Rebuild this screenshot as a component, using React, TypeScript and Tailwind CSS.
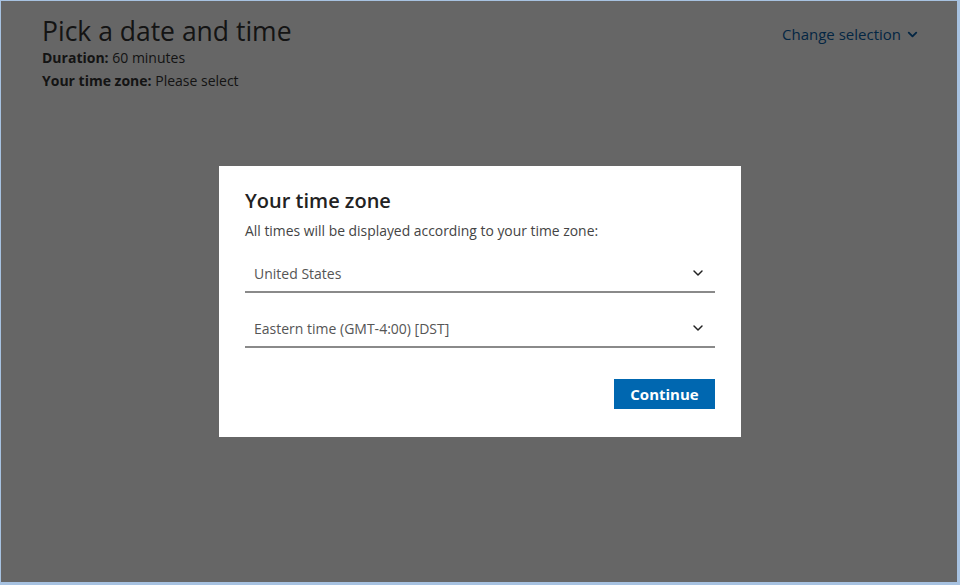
import { ChevronDown } from 'lucide-react';

const font = { fontFamily: '"Open Sans", "Liberation Sans", sans-serif' };

function Select({ value }: { value: string }) {
  return (
    <div className="flex items-center justify-between border-b-2 border-[#8a8a8a] pl-[9px] pr-[9px] h-[38px]">
      <span className="text-[14px] text-[#555]">{value}</span>
      <ChevronDown className="w-[16px] h-[16px] text-[#222]" strokeWidth={2.2} />
    </div>
  );
}

export default function App() {
  return (
    <div
      className="relative w-[960px] h-[585px] overflow-hidden bg-white border-t border-l border-r-[3px] border-b-[3px] border-[#a7c2e1]"
      style={font}
    >
      {/* page behind the dialog */}
      <div className="flex justify-between pl-[41px] pr-[37px] pt-[16px]">
        <div className="flex flex-col">
          <h1 className="text-[26.5px] leading-[29px] text-[#333]">Pick a date and time</h1>
          <p className="text-[14px] leading-[23px] text-[#333]">
            <span className="font-bold">Duration:</span> 60 minutes
          </p>
          <p className="text-[14px] leading-[23px] text-[#333]">
            <span className="font-bold">Your time zone:</span> Please select
          </p>
        </div>
        <button className="flex items-center gap-[4px] h-[24px] mt-[5px] text-[15px] text-[#0a5fa8]">
          Change selection
          <ChevronDown className="w-[15px] h-[15px]" strokeWidth={3} />
        </button>
      </div>

      {/* overlay */}
      <div className="absolute inset-0 bg-black/60 flex items-start justify-center pt-[165px] pl-[2px]">
        <div className="w-[522px] bg-white px-[26px] pt-[22px] pb-[28px] flex flex-col">
          <h2 className="text-[20px] leading-[26px] font-semibold text-[#222]">Your time zone</h2>
          <p className="mt-[7px] text-[13.9px] leading-[20px] text-[#444]">
            All times will be displayed according to your time zone:
          </p>
          <div className="mt-[14px] flex flex-col gap-[17px]">
            <Select value="United States" />
            <Select value="Eastern time (GMT-4:00) [DST]" />
          </div>
          <div className="flex justify-end mt-[31px]">
            <button className="w-[101px] h-[30px] bg-[#0067b0] text-white text-[15px] font-bold">
              Continue
            </button>
          </div>
        </div>
      </div>
    </div>
  );
}
